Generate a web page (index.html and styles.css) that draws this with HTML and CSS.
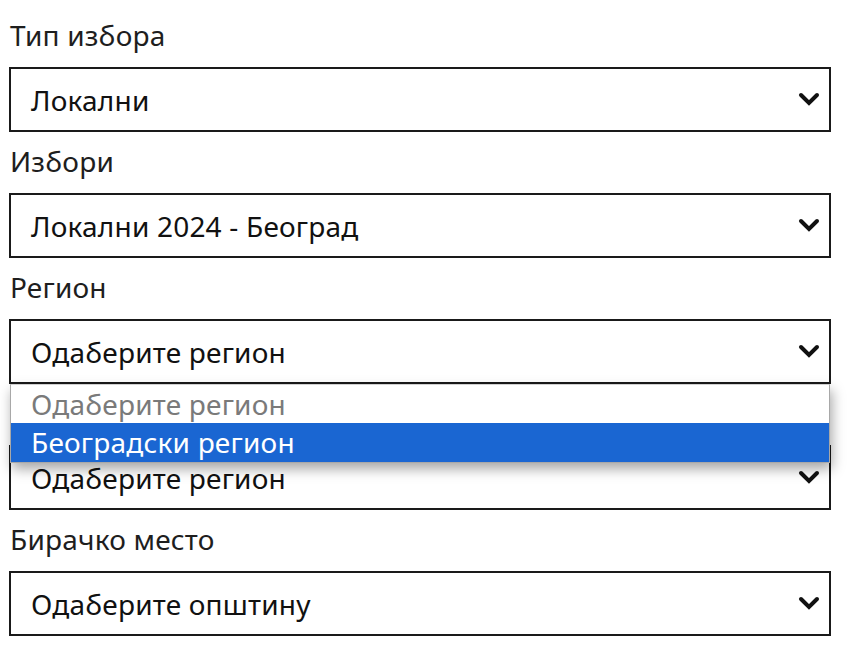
FILE: index.html
```html
<!DOCTYPE html>
<html lang="sr">
<head>
<meta charset="utf-8">
<title>Избори</title>
<link rel="stylesheet" href="styles.css">
</head>
<body>
<form class="form">
  <div class="group">
    <label class="label">Тип избора</label>
    <div class="select">
      <span class="value">Локални</span>
      <svg class="chev" width="22" height="14" viewBox="0 0 22 14"><path d="M3 3 L11 11 L19 3" fill="none" stroke="#111" stroke-width="4" stroke-linejoin="miter" stroke-linecap="round"/></svg>
    </div>
  </div>
  <div class="group">
    <label class="label">Избори</label>
    <div class="select">
      <span class="value">Локални 2024 - Београд</span>
      <svg class="chev" width="22" height="14" viewBox="0 0 22 14"><path d="M3 3 L11 11 L19 3" fill="none" stroke="#111" stroke-width="4" stroke-linejoin="miter" stroke-linecap="round"/></svg>
    </div>
  </div>
  <div class="group">
    <label class="label">Регион</label>
    <div class="select open">
      <span class="value">Одаберите регион</span>
      <svg class="chev" width="22" height="14" viewBox="0 0 22 14"><path d="M3 3 L11 11 L19 3" fill="none" stroke="#111" stroke-width="4" stroke-linejoin="miter" stroke-linecap="round"/></svg>
      <ul class="menu">
        <li class="option placeholder">Одаберите регион</li>
        <li class="option selected">Београдски регион</li>
      </ul>
    </div>
  </div>
  <div class="group">
    <label class="label covered">Општина</label>
    <div class="select">
      <span class="value">Одаберите регион</span>
      <svg class="chev" width="22" height="14" viewBox="0 0 22 14"><path d="M3 3 L11 11 L19 3" fill="none" stroke="#111" stroke-width="4" stroke-linejoin="miter" stroke-linecap="round"/></svg>
    </div>
  </div>
  <div class="group">
    <label class="label">Бирачко место</label>
    <div class="select">
      <span class="value">Одаберите општину</span>
      <svg class="chev" width="22" height="14" viewBox="0 0 22 14"><path d="M3 3 L11 11 L19 3" fill="none" stroke="#111" stroke-width="4" stroke-linejoin="miter" stroke-linecap="round"/></svg>
    </div>
  </div>
</form>
</body>
</html>
```
FILE: styles.css
```css
* { box-sizing: border-box; }
html, body {
  margin: 0;
  padding: 0;
  background: #fff;
}
body {
  font-family: "Noto Sans", "Open Sans", sans-serif;
  color: #1e1e1e;
  letter-spacing: 0.2px;
}
.form {
  display: flex;
  flex-direction: column;
  width: 822px;
  margin-left: 9px;
  padding-top: 16px;
}
.group {
  display: flex;
  flex-direction: column;
  padding-bottom: 10px;
}
.label {
  display: block;
  font-size: 28px;
  line-height: 38px;
  padding-left: 1px;
  margin-bottom: 13px;
}
.label.covered {
  visibility: hidden;
}
.select {
  position: relative;
  height: 65px;
  border: 2px solid #1a1a1a;
  background: #fff;
  display: flex;
  align-items: center;
  justify-content: space-between;
  padding: 1px 9px 0 20px;
  font-size: 28px;
}
.value {
  line-height: 38px;
  color: #111;
}
.chev {
  display: block;
  margin-top: -2px;
}
.menu {
  position: absolute;
  top: 100%;
  left: -1px;
  right: -1px;
  margin: 2px 0 0;
  padding: 0;
  list-style: none;
  background: #fff;
  border: 1px solid #a8a8a8;
  border-top-color: #d0d0d0;
  box-shadow: 2px 6px 12px rgba(0, 0, 0, 0.35);
  z-index: 10;
}
.option {
  height: 38px;
  line-height: 38px;
  padding-left: 20px;
  font-size: 28px;
}
.option.placeholder {
  color: #7a7a7a;
}
.option.selected {
  height: 39px;
  background: #1a66d2;
  color: #fff;
}
```
